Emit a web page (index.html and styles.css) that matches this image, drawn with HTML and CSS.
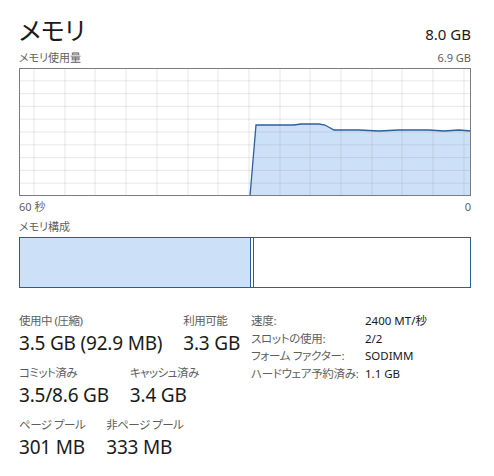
FILE: index.html
```html
<!DOCTYPE html>
<html lang="ja">
<head>
  <meta charset="UTF-8">
  <title>メモリ</title>
  <link rel="stylesheet" href="styles.css">
</head>
<body>

<div class="page">
  <div class="head">
    <h1>メモリ</h1>
    <span class="total">8.0 GB</span>
  </div>

  <div class="caption">
    <span>メモリ使用量</span>
    <span>6.9 GB</span>
  </div>

  <svg class="graph" width="452" height="128" viewBox="0 0 452 128">
    <path class="fill" d="M231 128 L237 57 L275 57 L282 56 L300 56 L306 57 L315 62 L340 62 L360 63 L380 62 L410 62 L425 63 L440 62 L452 63 L452 128 Z"/>
    <g class="grid">
      <path d="M15 0V128M46 0V128M76 0V128M107 0V128M138 0V128M169 0V128M199 0V128M230 0V128M261 0V128M291 0V128M322 0V128M353 0V128M383 0V128M414 0V128M445 0V128"/>
      <path d="M0 12.8H452M0 25.6H452M0 38.4H452M0 51.2H452M0 64H452M0 76.8H452M0 89.6H452M0 102.4H452M0 115.2H452"/>
    </g>
    <path class="line" d="M231 128 L237 57 L275 57 L282 56 L300 56 L306 57 L315 62 L340 62 L360 63 L380 62 L410 62 L425 63 L440 62 L452 63"/>
    <rect class="frame" x="0.5" y="0.5" width="451" height="127"/>
  </svg>

  <div class="caption axis">
    <span>60 秒</span>
    <span>0</span>
  </div>

  <div class="caption">
    <span>メモリ構成</span>
  </div>

  <div class="comp">
    <div class="used"></div>
    <div class="free"></div>
  </div>

  <div class="stats">
    <div class="left">
      <div class="row">
        <div class="stat"><div class="label">使用中 (圧縮)</div><div class="value">3.5 GB (92.9 MB)</div></div>
        <div class="stat"><div class="label">利用可能</div><div class="value">3.3 GB</div></div>
      </div>
      <div class="row">
        <div class="stat"><div class="label">コミット済み</div><div class="value">3.5/8.6 GB</div></div>
        <div class="stat"><div class="label">キャッシュ済み</div><div class="value">3.4 GB</div></div>
      </div>
      <div class="row">
        <div class="stat"><div class="label">ページ プール</div><div class="value">301 MB</div></div>
        <div class="stat"><div class="label">非ページ プール</div><div class="value">333 MB</div></div>
      </div>
    </div>

    <div class="specs">
      <span class="key">速度:</span><span>2400 MT/秒</span>
      <span class="key">スロットの使用:</span><span>2/2</span>
      <span class="key">フォーム ファクター:</span><span>SODIMM</span>
      <span class="key">ハードウェア予約済み:</span><span>1.1 GB</span>
    </div>
  </div>
</div>

</body>
</html>
```

FILE: styles.css
```css
body {
  margin: 0;
  background: #fff;
  color: #1a1a1a;
  font-family: "Noto Sans", "Noto Sans CJK JP", sans-serif;
  font-feature-settings: "palt";
  white-space: nowrap;
}

.page { padding: 10px 23px 0 19px; width: 452px; }

.head { display: flex; justify-content: space-between; align-items: flex-start; height: 36px; }
h1 { margin: 5px 0 0; font-size: 25px; font-weight: 400; line-height: 30px; }
.total { font-size: 15px; line-height: 20px; margin-top: 14px; }

.caption {
  display: flex; justify-content: space-between;
  font-size: 11px; line-height: 16px; color: #606060;
  height: 16px; margin-top: 4px;
}
.caption.axis { margin-top: 3px; margin-bottom: 2px; }

.graph { display: block; margin-top: 2px; }
.graph .fill { fill: #cce0f8; }
.graph .grid path { stroke: rgba(150, 150, 150, 0.22); stroke-width: 1; fill: none; }
.graph .line { stroke: #2e5f9e; stroke-width: 1.3; fill: none; }
.graph .frame { fill: none; stroke: #7c7c7c; stroke-width: 1; }

.comp {
  display: flex; height: 51px; margin-top: 2px;
  border: 1px solid #2b5c95; box-sizing: border-box;
}
.comp .used { width: 230px; background: #cce0f8; border-right: 1px solid #2b5c95; }
.comp .free { flex: 1; border-left: 1px solid #2b5c95; margin-left: 2px; }

.stats { display: flex; margin-top: 24px; }
.left { width: 232px; flex: none; }
.row { display: flex; gap: 21px; margin-bottom: 7px; }
.label { font-size: 11.5px; line-height: 17px; color: #5e5e5e; letter-spacing: -0.5px; }
.value { font-size: 19px; line-height: 28px; letter-spacing: -0.2px; }

.specs {
  display: grid; grid-template-columns: 114px auto;
  font-size: 11.5px; line-height: 17.7px; align-content: start;
  margin-top: 0;
}
.specs .key { color: #5e5e5e; letter-spacing: -0.3px; }
```
